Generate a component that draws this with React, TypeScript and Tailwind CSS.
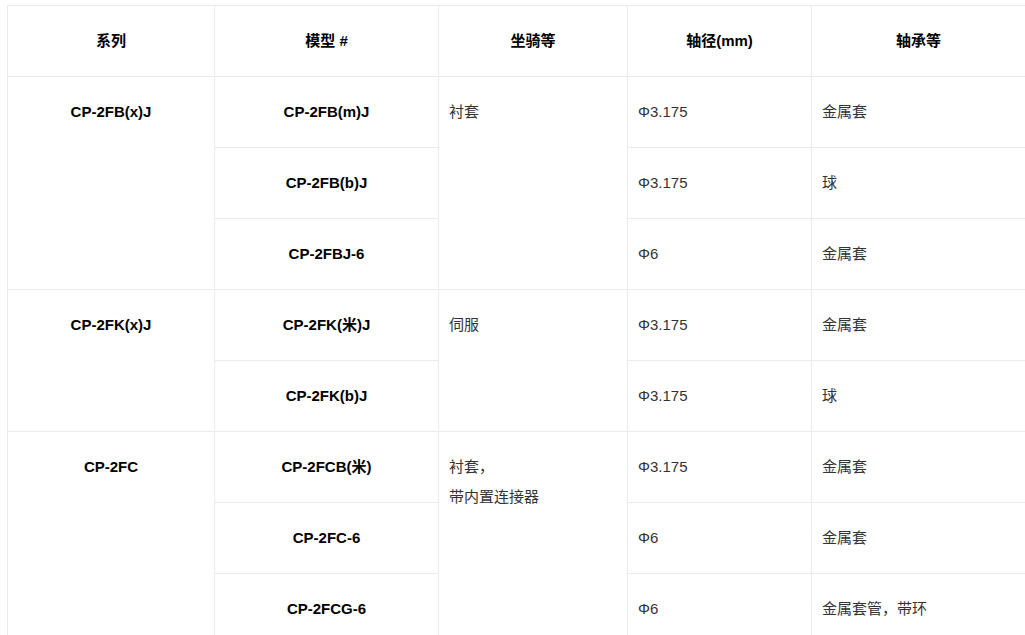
import React from "react";

const font = { fontFamily: '"Liberation Sans", "Noto Sans CJK SC", sans-serif' };

export default function App() {
  const H = "flex items-center justify-center border-r border-b border-[#ebebeb] font-bold text-black";
  const B = "border-r border-b border-[#ebebeb] pt-[20px] leading-[30px]";
  const bc = `${B} text-center font-bold text-black`;
  const bl = `${B} pl-[10px] text-[#333]`;
  return (
    <div className="w-[1025px] h-[635px] overflow-hidden bg-white text-[15px]" style={font}>
      <div className="ml-[7px] mt-[5px] grid w-[1019px] grid-cols-[207px_224px_189px_184px_214px] grid-rows-[71px_71px_71px_71px_71px_71px_71px_71px_71px] border-l border-t border-[#ebebeb]">
        <div className={H}>系列</div>
        <div className={H}>模型 #</div>
        <div className={H}>坐骑等</div>
        <div className={H}>轴径(mm)</div>
        <div className={H}>轴承等</div>

        <div className={`${bc} row-span-3`}>CP-2FB(x)J</div>
        <div className={bc}>CP-2FB(m)J</div>
        <div className={`${bl} row-span-3`}>衬套</div>
        <div className={bl}>Φ3.175</div>
        <div className={bl}>金属套</div>

        <div className={bc}>CP-2FB(b)J</div>
        <div className={bl}>Φ3.175</div>
        <div className={bl}>球</div>

        <div className={bc}>CP-2FBJ-6</div>
        <div className={bl}>Φ6</div>
        <div className={bl}>金属套</div>

        <div className={`${bc} row-span-2`}>CP-2FK(x)J</div>
        <div className={bc}>CP-2FK(米)J</div>
        <div className={`${bl} row-span-2`}>伺服</div>
        <div className={bl}>Φ3.175</div>
        <div className={bl}>金属套</div>

        <div className={bc}>CP-2FK(b)J</div>
        <div className={bl}>Φ3.175</div>
        <div className={bl}>球</div>

        <div className={`${bc} row-span-3`}>CP-2FC</div>
        <div className={bc}>CP-2FCB(米)</div>
        <div className={`${bl} row-span-3`}>
          <div>衬套，</div>
          <div>带内置连接器</div>
        </div>
        <div className={bl}>Φ3.175</div>
        <div className={bl}>金属套</div>

        <div className={bc}>CP-2FC-6</div>
        <div className={bl}>Φ6</div>
        <div className={bl}>金属套</div>

        <div className={bc}>CP-2FCG-6</div>
        <div className={bl}>Φ6</div>
        <div className={bl}>金属套管，带环</div>
      </div>
    </div>
  );
}
